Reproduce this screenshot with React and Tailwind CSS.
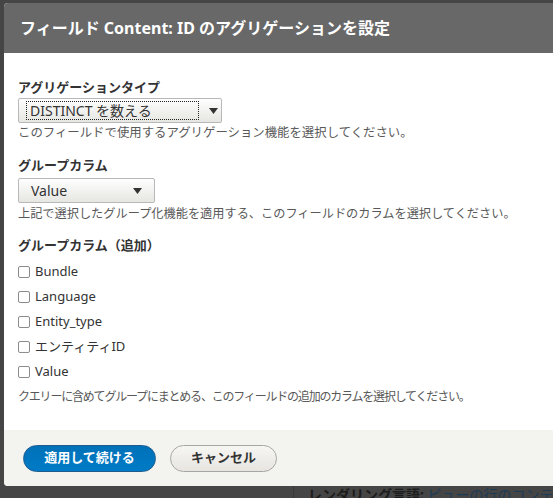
import React from 'react';

const jp = { fontFamily: '"Noto Sans", "Noto Sans CJK JP", sans-serif' };

const Caret = () => (
  <svg width="9" height="6" viewBox="0 0 9 6" className="shrink-0">
    <path d="M0 0h9L4.5 6z" fill="#333" />
  </svg>
);

const Checkbox = ({ label }) => (
  <label className="flex h-[25px] items-center gap-[5px] text-[13px] text-[#333]">
    <span className="block h-[12px] w-[12px] rounded-[2px] border border-[#8c8c8c] bg-white" />
    <span>{label}</span>
  </label>
);

const columns = ['Bundle', 'Language', 'Entity_type', 'エンティティID', 'Value'];

export default function App() {
  return (
    <div className="relative h-[498px] w-[553px] overflow-hidden bg-[#454545]" style={jp}>
      {/* page behind the overlay */}
      <div className="absolute left-[293px] top-[486px] h-[12px] w-px bg-[#3a3a3a]" />
      <div className="absolute left-[308px] top-[486px] whitespace-nowrap text-[14px] leading-[18px]">
        <span className="font-bold text-[#1c1c1c]">レンダリング言語: </span>
        <span className="text-[#1c3b57]">ビューの行のコンテンツ言</span>
      </div>

      {/* dialog */}
      <div className="absolute left-[4px] top-[3px] flex w-[570px] flex-col overflow-hidden rounded-[4px] bg-white">
        <div className="flex h-[50px] items-center bg-[#686868] px-[16px] text-[16px] font-bold text-white">
          フィールド Content: ID のアグリゲーションを設定
        </div>

        <div className="flex h-[377px] flex-col px-[14px] pt-[25px] text-[#333]">
          <div className="h-[18px] text-[13px] font-bold leading-[18px]">アグリゲーションタイプ</div>
          <div className="mt-[2px] flex h-[25px] w-[204px] items-center rounded-[2px] border border-[#b8b8b8] bg-gradient-to-b from-[#fefefe] to-[#e6e6e2] pl-[7px] pr-[3px]">
            <div className="flex h-[19px] flex-1 items-center border border-dotted border-[#222] pl-[3px] text-[14px]">
              DISTINCT を数える
            </div>
            <div className="ml-[10px]">
              <Caret />
            </div>
          </div>
          <div className="mt-[1px] h-[18px] text-[12.4px] leading-[18px] text-[#595959]">
            このフィールドで使用するアグリゲーション機能を選択してください。
          </div>

          <div className="mt-[14px] h-[18px] text-[13px] font-bold leading-[18px]">グループカラム</div>
          <div className="mt-[4px] flex h-[25px] w-[137px] items-center justify-between rounded-[2px] border border-[#b8b8b8] bg-gradient-to-b from-[#fefefe] to-[#e6e6e2] pl-[12px] pr-[12px] text-[14px]">
            <span>Value</span>
            <Caret />
          </div>
          <div className="mt-[2px] h-[18px] text-[12.2px] leading-[18px] text-[#595959]">
            上記で選択したグループ化機能を適用する、このフィールドのカラムを選択してください。
          </div>

          <div className="mt-[13px] h-[18px] text-[13px] font-bold leading-[18px]">グループカラム（追加）</div>
          <div className="mt-[5px] flex flex-col">
            {columns.map((c) => (
              <Checkbox key={c} label={c} />
            ))}
          </div>
          <div className="mt-[4px] h-[18px] text-[12px] leading-[18px] tracking-[-1.2px] text-[#595959]">
            クエリーに含めてグループにまとめる、このフィールドの追加のカラムを選択してください。
          </div>
        </div>

        <div className="flex h-[56px] items-center gap-[14px] bg-[#f3f3f0] px-[19px]">
          <button className="h-[27px] w-[133px] rounded-full border border-[#1e5c90] bg-gradient-to-t from-[#007bc6] to-[#0071b8] text-[13px] font-bold text-white">
            適用して続ける
          </button>
          <button className="h-[27px] w-[107px] rounded-full border border-[#a6a6a6] bg-gradient-to-t from-[#e8e5e1] to-[#f6f6f3] text-[13px] font-bold text-[#333]">
            キャンセル
          </button>
        </div>
      </div>
    </div>
  );
}
